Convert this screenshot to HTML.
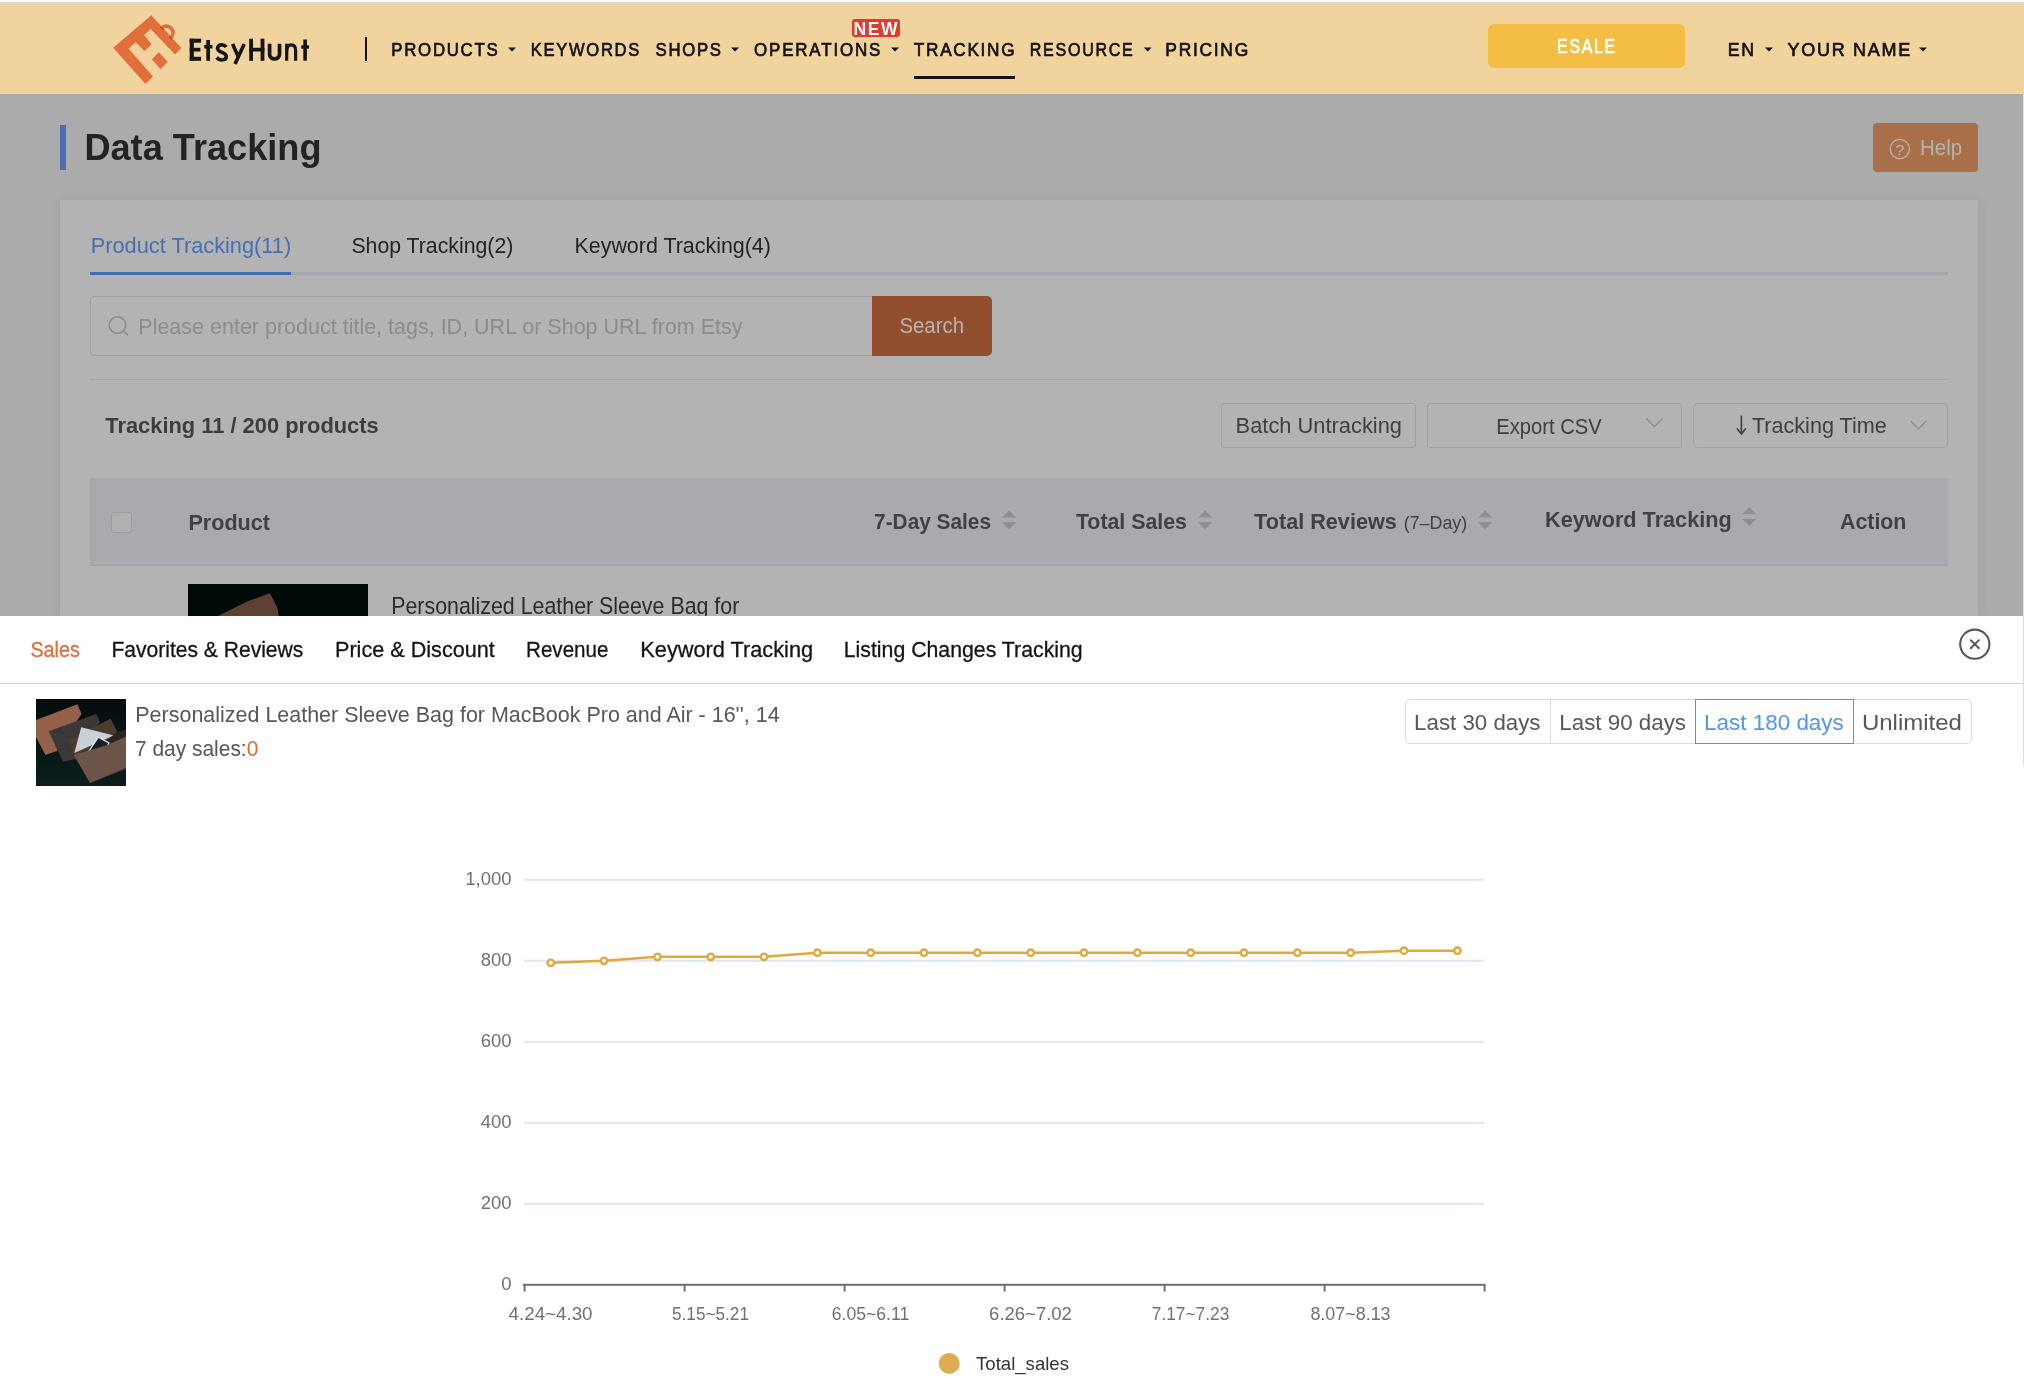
<!DOCTYPE html>
<html><head><meta charset="utf-8">
<style>
*{box-sizing:border-box;margin:0;padding:0}
html,body{width:2024px;height:1386px;overflow:hidden;background:#ffffff;position:relative;font-family:"Liberation Sans",sans-serif}
.a{position:absolute}
svg text{font-family:"Liberation Sans",sans-serif}
</style></head><body>
<div class="a" style="left:0px;top:0px;width:2024px;height:2px;background:#ffffff;"></div>
<div class="a" style="left:0px;top:2px;width:2024px;height:2px;background:#d8dadd;"></div>
<div class="a" style="left:0px;top:4px;width:2024px;height:90px;background:#f1d39e;"></div>
<div class="a" style="left:914px;top:76px;width:101px;height:3px;background:#121212;"></div>
<svg class="a" style="left:108px;top:10px" width="80" height="80" viewBox="0 0 1386 1386">
<path fill="#e26f3a" d="M90 655 L750 90 L1270 660 L1160 770 L740 330 L625 435 L755 595 L630 710 L480 555 L355 665 L780 1150 L650 1280 Z"/>
<path fill="#e26f3a" d="M880 730 L1035 895 L910 1025 L760 855 Z"/>
<path fill="none" stroke="#e26f3a" stroke-width="62" d="M930 310 A115 115 0 1 1 1090 480"/>
<path stroke="#d43f22" stroke-width="28" d="M905 290 L960 340 M1060 455 L1110 500"/>
</svg>
<div class="a" style="left:852px;top:19px;width:48px;height:18px;background:#e03b2e;border-radius:3px;"></div>
<div class="a" style="left:1488px;top:24px;width:197px;height:44px;background:#f4be45;border-radius:6px;"></div>
<div class="a" style="left:365px;top:37px;width:2px;height:24px;background:#121212;"></div>
<div class="a" style="left:0px;top:94px;width:2024px;height:522px;background:#ababab;"></div>
<div class="a" style="left:60px;top:200px;width:1918px;height:416px;background:#b3b3b3;box-shadow:0 0 12px rgba(0,0,0,0.06);"></div>
<div class="a" style="left:60px;top:125px;width:6px;height:45px;background:#4a6eae;"></div>
<div class="a" style="left:1873px;top:123px;width:105px;height:49px;background:#a86f48;border-radius:4px;"></div>
<div class="a" style="left:90px;top:272px;width:1858px;height:3px;background:#a6a6aa;"></div>
<div class="a" style="left:90px;top:272px;width:201px;height:3px;background:#3f6db0;"></div>
<div class="a" style="left:90px;top:296px;width:783px;height:60px;background:transparent;border-radius:4px 0 0 4px;border:1px solid #9fa0a5;"></div>
<div class="a" style="left:872px;top:296px;width:120px;height:60px;background:#924f2e;border-radius:0 5px 5px 0;"></div>
<div class="a" style="left:90px;top:379px;width:1858px;height:1px;background:#a4a4a8;"></div>
<div class="a" style="left:1221px;top:403px;width:195px;height:45px;background:transparent;border-radius:3px;border:1px solid #a0a0a4;"></div>
<div class="a" style="left:1427px;top:403px;width:255px;height:45px;background:transparent;border-radius:3px;border:1px solid #a0a0a4;"></div>
<div class="a" style="left:1693px;top:403px;width:255px;height:45px;background:transparent;border-radius:5px;border:1px solid #a0a0a4;"></div>
<div class="a" style="left:90px;top:478px;width:1858px;height:88px;background:#a9aaae;border-bottom:1px solid #a2a3a7;"></div>
<div class="a" style="left:111px;top:512px;width:21px;height:21px;background:#b0b0b1;border-radius:3px;border:1px solid #9c9da1;"></div>
<div class="a" style="left:0px;top:616px;width:2024px;height:770px;background:#ffffff;"></div>
<div class="a" style="left:0px;top:683px;width:2023px;height:1px;background:#cfcfcf;"></div>
<div class="a" style="left:2023px;top:616px;width:1px;height:150px;background:#dcdde0;"></div>
<div class="a" style="left:2023px;top:94px;width:1px;height:522px;background:#dfe1e8;"></div>
<div class="a" style="left:1405px;top:699px;width:567px;height:45px;background:transparent;border-radius:5px;border:1px solid #d9dbe0;"></div>
<div class="a" style="left:1550px;top:699px;width:1px;height:45px;background:#d9dbe0;"></div>
<div class="a" style="left:1695px;top:699px;width:159px;height:45px;background:transparent;border-radius:0;border:1px solid #4d94ef;"></div>
<svg class="a" style="left:188px;top:584px" width="180" height="32" viewBox="0 0 180 32">
<rect width="180" height="32" fill="#020909"/>
<path fill="#5e4034" d="M28 33 L60 17 L82 9.3 L89.3 23.6 L91 33 Z"/>
</svg>
<svg class="a" style="left:36px;top:699px" width="90" height="87" viewBox="0 0 90 87">
<defs><linearGradient id="bgg" x1="0" y1="0" x2="0" y2="1"><stop offset="0" stop-color="#050d0d"/><stop offset="1" stop-color="#0c1d1d"/></linearGradient></defs>
<rect width="90" height="87" fill="url(#bgg)"/>
<path fill="#94604a" d="M0 21 L41.4 5.3 L45.5 15 L20.7 52 L9.4 56 L0 38 Z"/>
<path fill="#3b3937" d="M12.6 32.3 L60.3 15.1 L64 23 L40 60 L27 62.8 Z"/>
<path fill="#4f3a2e" d="M32 40.8 L74.7 19.8 L90 50 L90 70 L54 84 Z"/>
<path fill="#c9d1d7" d="M38.3 54 L45.2 28.2 L77.8 36.4 Z"/>
<path fill="#2a2522" d="M70 42 L81.6 32.6 L90 31 L90 38 L72.8 46 Z"/>
<path fill="#16202a" stroke="#eef0f2" stroke-width="1.2" d="M50 56.5 L62.3 38.2 L73 44 L66 57 Z"/>
<path fill="#6b5548" d="M37.7 56 L55 51 L72.8 45.5 L90 37.5 L90 68.4 L54 84.1 Z"/>
</svg>
<svg class="a" style="left:0;top:0;will-change:transform" width="2024" height="1386" viewBox="0 0 2024 1386">
<path d="M508 47.6 L516 47.6 L512 51.6 Z" fill="#121212"/>
<path d="M731 47.6 L739 47.6 L735 51.6 Z" fill="#121212"/>
<path d="M891 47.6 L899 47.6 L895 51.6 Z" fill="#121212"/>
<path d="M1143.7 47.6 L1151.7 47.6 L1147.7 51.6 Z" fill="#121212"/>
<path d="M1765 47.6 L1773 47.6 L1769 51.6 Z" fill="#121212"/>
<path d="M1919 47.6 L1927 47.6 L1923 51.6 Z" fill="#121212"/>
<g fill="#151515">
<rect x="189.7" y="38.7" width="4.1" height="22.1"/><rect x="189.7" y="38.7" width="11.4" height="4.0"/><rect x="189.7" y="47.8" width="10.7" height="3.7"/><rect x="189.7" y="56.8" width="11.4" height="4.0"/>
<rect x="206.3" y="40" width="3.7" height="20.8"/><rect x="204.2" y="44.9" width="8.2" height="3.6"/>
<rect x="249.2" y="38.7" width="3.8" height="22.1"/><rect x="260.6" y="38.7" width="3.8" height="22.1"/><rect x="249.2" y="47.8" width="15.2" height="3.7"/>
<rect x="285.1" y="43.7" width="3.2" height="17"/>
<rect x="303.3" y="39.5" width="3.6" height="21.2"/><rect x="301.2" y="45.3" width="7.8" height="3.4"/>
</g>
<g fill="none" stroke="#151515">
<path stroke-width="3.6" d="M226.3 47 C225 45.3 223.3 44.9 221.6 44.9 C219.2 44.9 217.5 46.3 217.5 48.3 C217.5 50.6 219.8 51.6 222 52.4 C224.4 53.3 226.3 54.3 226.3 56.6 C226.3 58.8 224.3 60 221.8 60 C219.6 60 218 59 216.8 57.4"/>
<path stroke-width="3.6" d="M232.6 44 L238.6 57.6 M244.2 44 L235 63.9"/>
<path stroke-width="3.7" d="M269.6 43.7 V54.3 A4.95 4.6 0 0 0 279.5 54.3 V43.7"/>
<path stroke-width="3.2" d="M286.7 51.5 C286.7 46.5 289 44.9 291.2 44.9 C294 44.9 295.6 46.8 295.6 50.5 V60.7"/>
</g>
<circle cx="1899.8" cy="149" r="9.6" fill="none" stroke="#b3b3b3" stroke-width="1.3"/>
<circle cx="117.5" cy="325" r="8.3" fill="none" stroke="#8b8c91" stroke-width="1.6"/><path d="M123.5 331 L128 335.5" stroke="#8b8c91" stroke-width="1.6"/>
<path d="M1646.3 418.5 L1654.4 426.6 L1662.5 418.5" fill="none" stroke="#8c8d92" stroke-width="1.2"/>
<path d="M1741.4 415.5 L1741.4 433.5 M1737 428.5 L1741.4 434 L1745.8 428.5" fill="none" stroke="#3e3f43" stroke-width="1.6"/>
<path d="M1910.7 421 L1918.5 428.8 L1926.3 421" fill="none" stroke="#8c8d92" stroke-width="1.2"/>
<path d="M1002 517.4 L1009 510.4 L1016 517.4 Z M1002 522.1999999999999 L1016 522.1999999999999 L1009 529.1999999999999 Z" fill="#8e8f93"/>
<path d="M1198 517.4 L1205 510.4 L1212 517.4 Z M1198 522.1999999999999 L1212 522.1999999999999 L1205 529.1999999999999 Z" fill="#8e8f93"/>
<path d="M1478 517.4 L1485 510.4 L1492 517.4 Z M1478 522.1999999999999 L1492 522.1999999999999 L1485 529.1999999999999 Z" fill="#8e8f93"/>
<path d="M1742.3 514.1 L1749.3 507.1 L1756.3 514.1 Z M1742.3 518.9 L1756.3 518.9 L1749.3 525.9 Z" fill="#8e8f93"/>
<circle cx="1974.8" cy="644.2" r="14.6" fill="none" stroke="#55575c" stroke-width="2.1"/><path d="M1970.2 639.6 L1979.4 648.8 M1979.4 639.6 L1970.2 648.8" stroke="#55575c" stroke-width="2.0"/>
<rect x="524" y="878.8" width="960" height="2" fill="#e0e6f1"/>
<rect x="524" y="959.8" width="960" height="2" fill="#e0e6f1"/>
<rect x="524" y="1040.8" width="960" height="2" fill="#e0e6f1"/>
<rect x="524" y="1121.8" width="960" height="2" fill="#e0e6f1"/>
<rect x="524" y="1202.8" width="960" height="2" fill="#e0e6f1"/>
<rect x="523" y="1283.8" width="962" height="2" fill="#6e7079"/>
<rect x="523.6" y="1284" width="2" height="7.5" fill="#6e7079"/>
<rect x="683.6" y="1284" width="2" height="7.5" fill="#6e7079"/>
<rect x="843.6" y="1284" width="2" height="7.5" fill="#6e7079"/>
<rect x="1003.6" y="1284" width="2" height="7.5" fill="#6e7079"/>
<rect x="1163.6" y="1284" width="2" height="7.5" fill="#6e7079"/>
<rect x="1323.6" y="1284" width="2" height="7.5" fill="#6e7079"/>
<rect x="1483.6" y="1284" width="2" height="7.5" fill="#6e7079"/>
<polyline points="550.7,962.8 604.0,960.8 657.4,956.8 710.7,956.8 764.0,956.8 817.4,952.7 870.7,952.7 924.0,952.7 977.4,952.7 1030.7,952.7 1084.0,952.7 1137.4,952.7 1190.7,952.7 1244.0,952.7 1297.4,952.7 1350.7,952.7 1404.0,950.7 1457.4,950.7" fill="none" stroke="#e0a93f" stroke-width="2.6" stroke-linejoin="round"/>
<circle cx="550.7" cy="962.8" r="3.2" fill="#ffffff" stroke="#e0a93f" stroke-width="2.4"/>
<circle cx="604.0" cy="960.8" r="3.2" fill="#ffffff" stroke="#e0a93f" stroke-width="2.4"/>
<circle cx="657.4" cy="956.8" r="3.2" fill="#ffffff" stroke="#e0a93f" stroke-width="2.4"/>
<circle cx="710.7" cy="956.8" r="3.2" fill="#ffffff" stroke="#e0a93f" stroke-width="2.4"/>
<circle cx="764.0" cy="956.8" r="3.2" fill="#ffffff" stroke="#e0a93f" stroke-width="2.4"/>
<circle cx="817.4" cy="952.7" r="3.2" fill="#ffffff" stroke="#e0a93f" stroke-width="2.4"/>
<circle cx="870.7" cy="952.7" r="3.2" fill="#ffffff" stroke="#e0a93f" stroke-width="2.4"/>
<circle cx="924.0" cy="952.7" r="3.2" fill="#ffffff" stroke="#e0a93f" stroke-width="2.4"/>
<circle cx="977.4" cy="952.7" r="3.2" fill="#ffffff" stroke="#e0a93f" stroke-width="2.4"/>
<circle cx="1030.7" cy="952.7" r="3.2" fill="#ffffff" stroke="#e0a93f" stroke-width="2.4"/>
<circle cx="1084.0" cy="952.7" r="3.2" fill="#ffffff" stroke="#e0a93f" stroke-width="2.4"/>
<circle cx="1137.4" cy="952.7" r="3.2" fill="#ffffff" stroke="#e0a93f" stroke-width="2.4"/>
<circle cx="1190.7" cy="952.7" r="3.2" fill="#ffffff" stroke="#e0a93f" stroke-width="2.4"/>
<circle cx="1244.0" cy="952.7" r="3.2" fill="#ffffff" stroke="#e0a93f" stroke-width="2.4"/>
<circle cx="1297.4" cy="952.7" r="3.2" fill="#ffffff" stroke="#e0a93f" stroke-width="2.4"/>
<circle cx="1350.7" cy="952.7" r="3.2" fill="#ffffff" stroke="#e0a93f" stroke-width="2.4"/>
<circle cx="1404.0" cy="950.7" r="3.2" fill="#ffffff" stroke="#e0a93f" stroke-width="2.4"/>
<circle cx="1457.4" cy="950.7" r="3.2" fill="#ffffff" stroke="#e0a93f" stroke-width="2.4"/>
<circle cx="949.2" cy="1363.4" r="10.5" fill="#dfac52"/>
<g transform="translate(391.32 56.0) scale(0.8773 1)"><text x="0" y="0" font-size="19.19" fill="#121212" stroke="#121212" stroke-width="0.7" textLength="121.22" lengthAdjust="spacing">PRODUCTS</text></g>
<g transform="translate(530.74 56.0) scale(0.8641 1)"><text x="0" y="0" font-size="19.19" fill="#121212" stroke="#121212" stroke-width="0.7" textLength="125.70" lengthAdjust="spacing">KEYWORDS</text></g>
<g transform="translate(655.54 56.0) scale(0.8728 1)"><text x="0" y="0" font-size="19.19" fill="#121212" stroke="#121212" stroke-width="0.7" textLength="74.96" lengthAdjust="spacing">SHOPS</text></g>
<g transform="translate(754.00 56.0) scale(0.8830 1)"><text x="0" y="0" font-size="19.19" fill="#121212" stroke="#121212" stroke-width="0.7" textLength="143.12" lengthAdjust="spacing">OPERATIONS</text></g>
<g transform="translate(913.81 56.0) scale(0.8965 1)"><text x="0" y="0" font-size="19.19" fill="#121212" stroke="#121212" stroke-width="0.7" textLength="112.41" lengthAdjust="spacing">TRACKING</text></g>
<g transform="translate(1029.78 56.0) scale(0.8379 1)"><text x="0" y="0" font-size="19.19" fill="#121212" stroke="#121212" stroke-width="0.7" textLength="122.94" lengthAdjust="spacing">RESOURCE</text></g>
<g transform="translate(1165.37 56.0) scale(0.9085 1)"><text x="0" y="0" font-size="19.19" fill="#121212" stroke="#121212" stroke-width="0.7" textLength="91.18" lengthAdjust="spacing">PRICING</text></g>
<g transform="translate(1727.85 56.0) scale(0.9228 1)"><text x="0" y="0" font-size="19.19" fill="#121212" stroke="#121212" stroke-width="0.7" textLength="28.49" lengthAdjust="spacing">EN</text></g>
<g transform="translate(1787.60 56.0) scale(0.9387 1)"><text x="0" y="0" font-size="19.19" fill="#121212" stroke="#121212" stroke-width="0.7" textLength="130.68" lengthAdjust="spacing">YOUR NAME</text></g>
<g transform="translate(853.43 34.9) scale(0.9421 1)"><text x="0" y="0" font-size="18.60" font-weight="bold" fill="#ffffff" textLength="46.80" lengthAdjust="spacing">NEW</text></g>
<g transform="translate(1557.10 53.2) scale(0.7989 1)"><text x="0" y="0" font-size="19.91" fill="#ffffff" stroke="#ffffff" stroke-width="0.7" textLength="72.71" lengthAdjust="spacing">ESALE</text></g>
<text x="84.4" y="160.2" font-size="37.06" font-weight="bold" fill="#222326" textLength="237.1" lengthAdjust="spacingAndGlyphs">Data Tracking</text>
<text x="1895.2" y="154.5" font-size="15.26" fill="#b3b3b3" textLength="9.2" lengthAdjust="spacingAndGlyphs">?</text>
<text x="1920.0" y="154.8" font-size="21.80" fill="#b3b3b3" textLength="42.1" lengthAdjust="spacingAndGlyphs">Help</text>
<text x="90.7" y="252.9" font-size="21.80" fill="#4470b0" textLength="200.5" lengthAdjust="spacingAndGlyphs">Product Tracking(11)</text>
<text x="351.4" y="252.9" font-size="21.80" fill="#232323" textLength="161.9" lengthAdjust="spacingAndGlyphs">Shop Tracking(2)</text>
<text x="574.5" y="252.9" font-size="21.80" fill="#232323" textLength="196.4" lengthAdjust="spacingAndGlyphs">Keyword Tracking(4)</text>
<text x="138.3" y="334.0" font-size="22.38" fill="#8b8c91" textLength="604.2" lengthAdjust="spacingAndGlyphs">Please enter product title, tags, ID, URL or Shop URL from Etsy</text>
<text x="899.4" y="333.2" font-size="22.53" fill="#b5b5b5" textLength="64.7" lengthAdjust="spacingAndGlyphs">Search</text>
<text x="105.3" y="432.5" font-size="21.51" font-weight="bold" fill="#3c3d41" textLength="273.4" lengthAdjust="spacingAndGlyphs">Tracking 11 / 200 products</text>
<text x="1235.6" y="432.5" font-size="22.53" fill="#3e3f43" textLength="166.4" lengthAdjust="spacingAndGlyphs">Batch Untracking</text>
<text x="1496.2" y="434.1" font-size="22.53" fill="#3e3f43" textLength="105.5" lengthAdjust="spacingAndGlyphs">Export CSV</text>
<text x="1751.9" y="432.6" font-size="22.53" fill="#3e3f43" textLength="134.9" lengthAdjust="spacingAndGlyphs">Tracking Time</text>
<text x="188.5" y="529.9" font-size="21.80" font-weight="bold" fill="#404146" textLength="81.4" lengthAdjust="spacingAndGlyphs">Product</text>
<text x="874.1" y="528.8" font-size="21.80" font-weight="bold" fill="#404146" textLength="116.9" lengthAdjust="spacingAndGlyphs">7-Day Sales</text>
<text x="1075.9" y="528.8" font-size="21.80" font-weight="bold" fill="#404146" textLength="111.1" lengthAdjust="spacingAndGlyphs">Total Sales</text>
<text x="1254.1" y="528.8" font-size="21.80" font-weight="bold" fill="#404146" textLength="142.7" lengthAdjust="spacingAndGlyphs">Total Reviews</text>
<text x="1403.7" y="528.8" font-size="19.19" fill="#404146" textLength="63.5" lengthAdjust="spacingAndGlyphs">(7–Day)</text>
<text x="1545.1" y="526.5" font-size="21.80" font-weight="bold" fill="#404146" textLength="186.6" lengthAdjust="spacingAndGlyphs">Keyword Tracking</text>
<text x="1840.0" y="529.1" font-size="21.80" font-weight="bold" fill="#404146" textLength="66.4" lengthAdjust="spacingAndGlyphs">Action</text>
<defs><clipPath id="cliprow"><rect x="0" y="0" width="2024" height="616"/></clipPath></defs><g clip-path="url(#cliprow)"><text x="391.2" y="614.4" font-size="23.26" fill="#2b2b2b" textLength="348.1" lengthAdjust="spacingAndGlyphs">Personalized Leather Sleeve Bag for</text></g>
<text x="30.4" y="657.0" font-size="22.24" fill="#e06f3c" stroke="#e06f3c" stroke-width="0.3" textLength="49.4" lengthAdjust="spacingAndGlyphs">Sales</text>
<text x="111.4" y="657.0" font-size="22.24" fill="#141414" stroke="#141414" stroke-width="0.3" textLength="191.9" lengthAdjust="spacingAndGlyphs">Favorites &amp; Reviews</text>
<text x="335.0" y="657.0" font-size="22.24" fill="#141414" stroke="#141414" stroke-width="0.3" textLength="159.8" lengthAdjust="spacingAndGlyphs">Price &amp; Discount</text>
<text x="526.0" y="657.0" font-size="22.24" fill="#141414" stroke="#141414" stroke-width="0.3" textLength="82.5" lengthAdjust="spacingAndGlyphs">Revenue</text>
<text x="640.3" y="657.0" font-size="22.24" fill="#141414" stroke="#141414" stroke-width="0.3" textLength="172.8" lengthAdjust="spacingAndGlyphs">Keyword Tracking</text>
<text x="843.7" y="657.0" font-size="22.24" fill="#141414" stroke="#141414" stroke-width="0.3" textLength="239.0" lengthAdjust="spacingAndGlyphs">Listing Changes Tracking</text>
<text x="135.3" y="721.9" font-size="22.24" fill="#55575c" textLength="644.3" lengthAdjust="spacingAndGlyphs">Personalized Leather Sleeve Bag for MacBook Pro and Air - 16'', 14</text>
<text x="135.0" y="755.5" font-size="22.24" fill="#55575c" textLength="123.3" lengthAdjust="spacingAndGlyphs">7 day sales:<tspan fill="#e36a2c">0</tspan></text>
<text x="1414.1" y="730.0" font-size="22.53" fill="#55575c" textLength="126.4" lengthAdjust="spacingAndGlyphs">Last 30 days</text>
<text x="1559.3" y="730.0" font-size="22.53" fill="#55575c" textLength="126.7" lengthAdjust="spacingAndGlyphs">Last 90 days</text>
<text x="1704.1" y="730.0" font-size="22.53" fill="#4f96f0" textLength="139.7" lengthAdjust="spacingAndGlyphs">Last 180 days</text>
<text x="1861.9" y="730.0" font-size="22.53" fill="#55575c" textLength="100.1" lengthAdjust="spacingAndGlyphs">Unlimited</text>
<text x="511.5" y="885.0" font-size="18.50" fill="#6e7079" text-anchor="end">1,000</text>
<text x="511.5" y="966.0" font-size="18.50" fill="#6e7079" text-anchor="end">800</text>
<text x="511.5" y="1047.0" font-size="18.50" fill="#6e7079" text-anchor="end">600</text>
<text x="511.5" y="1128.0" font-size="18.50" fill="#6e7079" text-anchor="end">400</text>
<text x="511.5" y="1209.0" font-size="18.50" fill="#6e7079" text-anchor="end">200</text>
<text x="511.5" y="1290.0" font-size="18.50" fill="#6e7079" text-anchor="end">0</text>
<text x="508.6" y="1320.0" font-size="18.50" fill="#6e7079" textLength="83.9" lengthAdjust="spacingAndGlyphs">4.24~4.30</text>
<text x="672.0" y="1320.0" font-size="18.50" fill="#6e7079" textLength="77.0" lengthAdjust="spacingAndGlyphs">5.15~5.21</text>
<text x="831.8" y="1320.0" font-size="18.50" fill="#6e7079" textLength="77.5" lengthAdjust="spacingAndGlyphs">6.05~6.11</text>
<text x="989.1" y="1320.0" font-size="18.50" fill="#6e7079" textLength="82.8" lengthAdjust="spacingAndGlyphs">6.26~7.02</text>
<text x="1151.8" y="1320.0" font-size="18.50" fill="#6e7079" textLength="77.5" lengthAdjust="spacingAndGlyphs">7.17~7.23</text>
<text x="1310.4" y="1320.0" font-size="18.50" fill="#6e7079" textLength="80.2" lengthAdjust="spacingAndGlyphs">8.07~8.13</text>
<text x="976.0" y="1369.8" font-size="18.50" fill="#333333" textLength="93.0" lengthAdjust="spacingAndGlyphs">Total_sales</text>
</svg>
</body></html>
